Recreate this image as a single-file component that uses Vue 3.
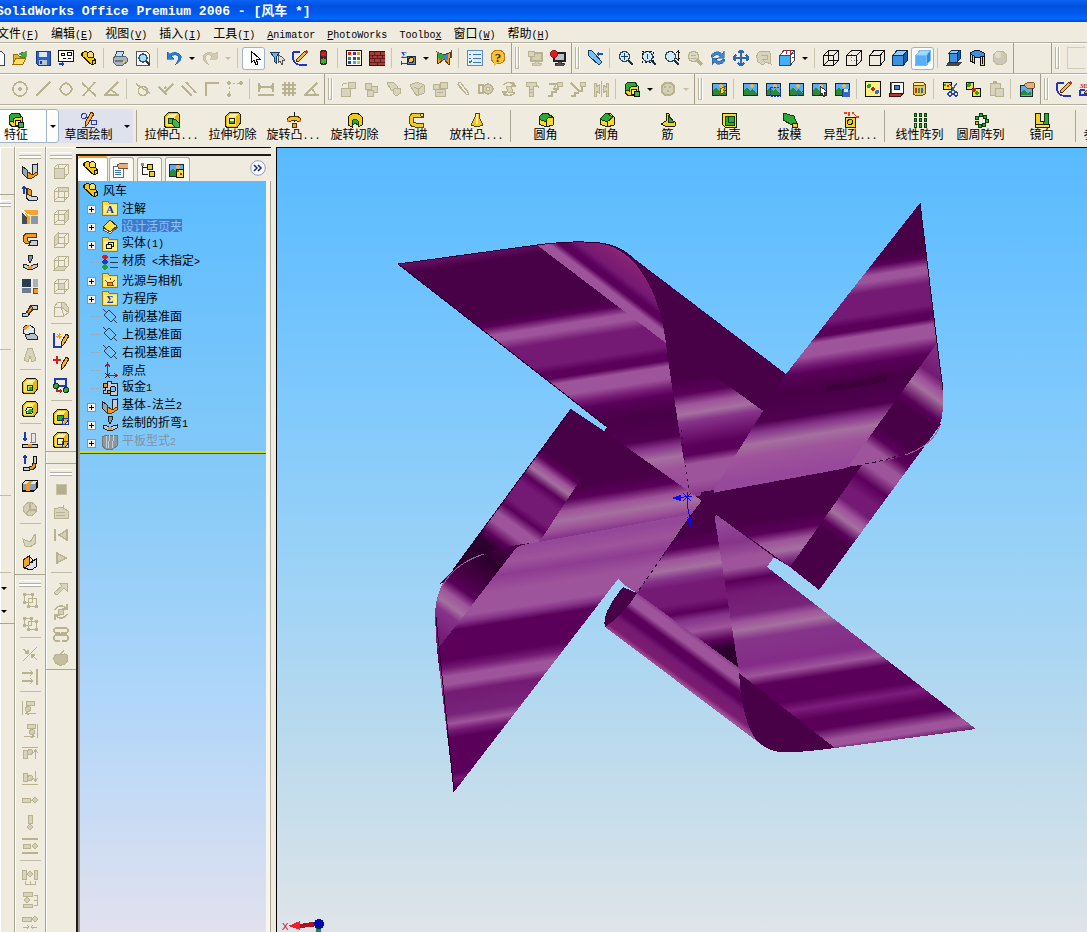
<template>
  <div class="app">
    <header class="title">
      <Label text="SolidWorks Office Premium 2006 - [风车 *]" />
    </header>

    <nav class="menu">
      <button v-for="item in menu" :key="item" type="button"><Label :text="item" /></button>
    </nav>

    <div v-for="(row, r) in toolbarRows" :key="r" class="toolrow">
      <div v-for="(bar, b) in row" :key="b" class="bar" :class="bar.kind">
        <i v-if="bar.grip" class="grip"></i>
        <template v-for="(name, i) in bar.items" :key="i">
          <i v-if="name === '|'" class="sep"></i>
          <button v-else-if="name === 'v' || name === 'vx'" type="button" class="arrow" :class="{ off: name === 'vx' }" aria-label="more"></button>
          <button v-else type="button" class="tool" :class="{ on: name === 'select' || name === 'shaded' }" :aria-label="name">
            <svg viewBox="0 0 16 16" v-html="icons[name]"></svg>
          </button>
        </template>
        <span v-if="bar.kind === 'last'" class="slot"></span>
      </div>
    </div>

    <div class="commands">
      <button type="button" class="mode active">
        <svg viewBox="0 0 16 16" v-html="icons.feature"></svg>
        <Label text="特征" />
      </button>
      <button type="button" class="arrow mode-arrow" aria-label="特征"></button>
      <button type="button" class="mode sketch">
        <svg viewBox="0 0 16 16" v-html="icons.sketchTab"></svg>
        <Label text="草图绘制" />
      </button>
      <button type="button" class="arrow sketch-arrow" aria-label="草图绘制"></button>
      <template v-for="(cmd, i) in commands" :key="i">
        <i v-if="cmd === '|'" class="sep"></i>
        <button v-else type="button" class="command">
          <svg viewBox="0 0 16 16" v-html="icons[cmd[0]]"></svg>
          <Label :text="cmd[1]" />
        </button>
      </template>
    </div>

    <main class="main">
      <aside class="dock narrow">
        <div class="blank top"></div>
        <i class="grip"></i>
        <div class="blank a"></div>
        <i class="sep"></i>
        <div class="blank b"></div>
        <i class="sep"></i>
        <div class="blank c"></div>
        <i class="sep"></i>
        <button type="button" class="arrow" aria-label="more"></button>
        <button type="button" class="arrow" aria-label="more"></button>
        <div class="edge"></div>
      </aside>
      <aside v-for="(dock, d) in docks" :key="d" class="dock" :class="'dock-' + d">
        <section v-for="(group, s) in dock" :key="s">
          <i class="grip"></i>
          <template v-for="(name, i) in group" :key="i">
            <i v-if="name === '|'" class="sep"></i>
            <button v-else type="button" class="tool" :aria-label="name">
              <svg viewBox="0 0 16 16" v-html="icons[name]"></svg>
            </button>
          </template>
        </section>
      </aside>

      <section class="manager">
        <div class="tabs">
          <button v-for="(tab, i) in tabs" :key="tab" type="button" :class="{ current: i === 0 }" :aria-label="tab">
            <svg viewBox="0 0 16 16" v-html="icons[tab]"></svg>
          </button>
          <button type="button" class="expand" aria-label="expand">
            <svg viewBox="0 0 16 16" v-html="icons.chevrons"></svg>
          </button>
        </div>
        <div class="tree">
          <ul>
            <li class="root">
              <svg viewBox="0 0 16 16" v-html="icons.part"></svg>
              <Label text="风车" />
            </li>
            <li v-for="node in nodes" :key="node.text" :class="node.state">
              <button v-if="node.open" type="button" class="plus" :aria-label="node.text"></button>
              <i v-else class="stub"></i>
              <svg viewBox="0 0 16 16" v-html="icons[node.icon]"></svg>
              <Label :text="node.text" />
            </li>
          </ul>
        </div>
      </section>

      <section class="viewport">
        <svg class="model" viewBox="277 148 810 784" width="810" height="784">
          <defs>
            <linearGradient
              v-for="g in gradients"
              :id="g.id"
              :key="g.id"
              gradientUnits="userSpaceOnUse"
              :x1="g.x1"
              :y1="g.y1"
              :x2="g.x2"
              :y2="g.y2"
            >
              <stop v-for="(s, i) in g.stops" :key="i" :offset="s.offset" :stop-color="s.color" />
            </linearGradient>
          </defs>
          <path v-for="(f, i) in faces" :key="i" :d="f.d" :fill="f.fill" />
          <g fill="none" stroke="#26002a" stroke-width="1">
            <path d="M398 264L537 245Q575 240 600 243Q618 245 632 257M920 203L937 343L943 390" />
            <path d="M398 264L607 427M453 570L571 409M436 617L454 792" />
            <path d="M865 464Q888 460 900 455M689 518L637 593" stroke-dasharray="4 3" />
            <path d="M681 430L689 490" stroke-dasharray="2 5" />
          </g>
          <g fill="none" stroke="#a35a9d" stroke-width="1">
            <path d="M437 600Q446 566 484 554M905 455Q932 446 940 426" />
          </g>
          <g fill="none" stroke="#0a0af0" stroke-width="1">
            <path d="M676 498L692 496M687 492V503L690 520M683 493L691 501M691 493L683 501" />
            <path d="M671 498L681 495V501ZM687 517L692 519L691 528Z" fill="#0a0af0" stroke="none" />
          </g>
        </svg>
        <svg class="triad" viewBox="0 0 48 16" width="48" height="16">
          <text x="2" y="14" font-family="Liberation Mono, monospace" font-size="11" fill="#d8101c">X</text>
          <path d="M36 10H41V16H36z" fill="#178a2c" />
          <path d="M20 8L38 5V10L20 12z" fill="#b0101c" />
          <path d="M8 10L20 5V14z" fill="#ec2028" />
          <circle cx="39" cy="8" r="5" fill="#0707a8" />
        </svg>
      </section>
    </main>
  </div>
</template>

<script setup>
import { h } from 'vue';

// "_" marks the accelerator letter; runs of Latin are half the width of a Han character
function Label({ text }) {
  const runs = text.match(/[\x20-\x7e]+|[^\x20-\x7e]+/g);
  return h('span', { class: 'label' }, runs.map(run => {
    if (run.charCodeAt(0) > 0x7e)
      return run;
    const parts = run.split(/_(.)/);
    return h('span', { class: 'latin' }, parts.map((p, i) => (i % 2 ? h('u', p) : p)));
  }));
}
Label.props = ['text'];

const menu = ['文件(_F)', '编辑(_E)', '视图(_V)', '插入(_I)', '工具(_T)', '_Animator', '_PhotoWorks', 'Toolbo_x', '窗口(_W)', '帮助(_H)'];

const list = text => text.split(' ');

const toolbarRows = [
  [
    { kind: 'first', items: list('new open save make part | print preview | undo v redo vx | select filter sketch traffic | palette bricks | measure v fly | checklist help') },
    { grip: true, items: list('monitorOff monitor') },
    { grip: true, items: list('flashlight | zoomFit zoomArea zoomInOut zoomSel rotate pan rollOff viewCube v | wire hidden noHidden edges shaded | shadow section ballOff') },
    { kind: 'filler', items: [] },
    { kind: 'last', grip: true, items: [] }
  ],
  [
    { kind: 'indent', items: list('sCenter sLine sQuad sCross sAngle | sTangent sPerp sParallel sCorner sPoints | sWidth sGrid sSlope') },
    { grip: true, items: list('aInsert aBoxes aHide aEdit aGroup aClip aMate aRotate aBolt aStep1 aStep2 aMirror | feature v gearOff vx') },
    { kind: 'wide', grip: true, items: list('picFlash | pic picCrop picBack picPick picSave | dots book jar | cutPic copyPic pasteOff | picHand') },
    { kind: 'last2', grip: true, items: list('sketch sketch3d') }
  ]
];

const commands = [
  '|',
  ['extrude', '拉伸凸...'], ['extrudeCut', '拉伸切除'], ['revolve', '旋转凸...'],
  ['revolveCut', '旋转切除'], ['sweep', '扫描'], ['loft', '放样凸...'],
  '|',
  ['fillet', '圆角'], ['chamfer', '倒角'], ['rib', '筋'],
  ['shell', '抽壳'], ['draft', '拔模'], ['hole', '异型孔...'],
  '|',
  ['linear', '线性阵列'], ['circular', '圆周阵列'], ['mirror', '镜向'],
  '|',
  ['plane', '参考几...']
];

const docks = [
  [
    list('flange edgeFlange miter hem bend corner jog closed ripOff | cutBox cutRound | unfold fold flat noBendOff | ripGray convert'),
    list('gGroup gUngroup | gCross gArrows | gLeft gRight gTop gBottom gRow gCol gMid | gDistH gDistV gPack')
  ],
  [
    list('vFront vBack vLeft vRight vTop vBottom vIso | planeNew plusPencil relation | exBox cutSq'),
    list('stop record rewind play | gPick gSpin gSpring gApple')
  ]
];

const tabs = ['part', 'property', 'config', 'photo'];

const nodes = [
  { icon: 'note', text: '注解', open: true },
  { icon: 'binder', text: '设计活页夹', open: true, state: 'selected' },
  { icon: 'solids', text: '实体(1)', open: true },
  { icon: 'material', text: '材质 <未指定>' },
  { icon: 'light', text: '光源与相机', open: true },
  { icon: 'equation', text: '方程序', open: true },
  { icon: 'plane', text: '前视基准面' },
  { icon: 'plane', text: '上视基准面' },
  { icon: 'plane', text: '右视基准面' },
  { icon: 'origin', text: '原点' },
  { icon: 'sheet', text: '钣金1' },
  { icon: 'flange', text: '基体-法兰2', open: true },
  { icon: 'bend', text: '绘制的折弯1', open: true },
  { icon: 'flatPattern', text: '平板型式2', open: true, state: 'suppressed' }
];

// icon building blocks, all on a 16x16 grid
const OFF = '#b9b28f';
const p = (d, fill = 'none', stroke = 'none', width = 1) =>
  `<path d="${d}" fill="${fill}" stroke="${stroke}" stroke-width="${width}"/>`;
const c = (x, y, r, fill = 'none', stroke = 'none', width = 1) =>
  `<circle cx="${x}" cy="${y}" r="${r}" fill="${fill}" stroke="${stroke}" stroke-width="${width}"/>`;
const t = (x, y, size, fill, s) =>
  `<text x="${x}" y="${y}" font-size="${size}" font-weight="bold" font-family="Liberation Serif, serif" text-anchor="middle" fill="${fill}">${s}</text>`;
const off = (d, width = 1.5) => p(d, 'none', OFF, width);
const offFill = d => p(d, '#d8d3bc', OFF);
const cube = (front, top, side, stroke = '#000') =>
  p('M.5 5.5H11V15.5H.5z', front, stroke) + p('M.5 5.5L5 .5H15.5L11 5.5z', top, stroke) + p('M11 5.5L15.5 .5V10.5L11 15.5z', side, stroke);
const lens = inner => p('M10 10L15 15', 'none', '#1f3140', 2.5) + c(6.5, 6.5, 5, '#cfeafa', '#28465c', 1.3) + inner;
const picture = (extra = '') =>
  p('M1 2H15V14H1z', '#58aef4', '#1c2430') + c(10, 5, 1.8, '#f8b048') + p('M1.5 13.5V10L5 6L8 10L11 8L14.5 12V13.5z', '#2c8a32') + extra;
const folder = inner => p('M.5 3.5V1.5H6L7.5 3.5H15.5V15H.5z', '#f7dc52', '#9a7a10') + p('M1.5 4.5H14.5V14H1.5z', '#fdee86') + inner;
const block = inner => p('M.5 4.5L4.5 .5H13.5L15 2V11.5L12 15.5H2L.5 14z', '#e8b80c', '#221c00') + p('M2 5H11V14H2z', '#fbe45c') + p('M2 5L5 2H13L11 5z', '#fdf09c') + inner;
const pencil = p('M8 11L13 2L16 4L11 12L8 15z', '#f3b43c', '#3c2404');
const face = d => p('M1 5H11V15H1zM1 5L5 1H15V11L11 15M11 5L15 1M5 1V11H15M5 11L1 15', 'none', OFF) + p(d, '#d8d3bc', OFF);
const monitor = (body, screen, line) => p('M4 3H15V11H4z', screen, line, 1.4) + p('M8 11H11V13H14V15H5V13H8z', body, line, .8);

const icons = {
  new: p('M4 1H12L15 4V15H4z', '#fff', '#345'),
  open: p('M1 14V4H5L7 6H12V8', '#e8b820', '#9c6c08') + p('M1 14L4 8H14L11 14z', '#ffe060', '#9c6c08') + p('M7 4Q10 1 12 3L14 1V7H8L10 5z', '#3fae3c', '#1c6a20', .6),
  save: p('M1 1H15V15H3L1 13z', '#2d63c8', '#173a86') + p('M4 1.5H12V7H4z', '#d9e6f6') + p('M4 10H12V15H4z', '#b8c4d4') + p('M5 11H7V14H5z', '#173a86'),
  make: p('M.5 .5H15.5V11.5H.5z', '#fff', '#111') + p('M3.5 3.5H6.5V5.5H3.5zM9.5 2.5H13.5V5.5H9.5zM4.5 8.5H7.5M9.5 8.5H12.5', 'none', '#111') + p('M1 14H6M4 12L6 14L4 16', 'none', '#1c3cc8', 1.3),
  part: p('M1 3L5 1L14 9L15 13L11 15L1 6z', '#f2c81c', '#1c1800', 1.2) + p('M6 3L10 1L12 3V7L8 8L6 6z', '#f9e060', '#1c1800') + p('M5 10L1 6M11 15V11L15 10', 'none', '#1c1800'),
  print: p('M5 1H12L10 7H3z', '#bfe0fb', '#27506e') + p('M1 8L4 6H13L15 8V12L11 15H4L1 12z', '#a9b4bd', '#58646e') + p('M3 10H11V12H3z', '#6b7882') + c(12, 12, 1, '#f8c430'),
  preview: p('M1 1H11L14 4V15H1z', '#fff', '#4a5660') + p('M10 10L15 15', 'none', '#234', 2) + c(8, 8, 4, '#a8dcf8', '#2a5878', 1.4),
  undo: p('M1 2V9H8L5 6Q9 3 12 6Q14 9 9 15Q16 11 15 6Q11 0 4 4z', '#2a80d8', '#1456a4', .6),
  redo: p('M15 2V9H8L10 7Q7 3 4 6Q2 9 7 15Q0 11 1 6Q5 0 12 4z', '#d0cbb1', OFF, .6),
  select: p('M5 1V13L8 10L10 15L12 14L10 9H14z', '#fff', '#111'),
  filter: p('M1 2H11L7 7V13L5 11V7z', '#68b0f0', '#123c68') + p('M9 4V13L11 11L13 15L14 14L13 10H16z', '#ddd', '#333', .8),
  sketch: p('M1 2H8M1 2V7Q1 14 8 15H15', 'none', '#2434c0', 1.8) + p('M5 9L13 1L15 3L7 11L4 12z', '#f3b43c', '#5a2c10') + p('M12 2L14 0L16 2L14 4z', '#b83428'),
  sketch3d: t(5, 7, 7, '#c03010', '3D') + p('M1 9H6M1 9V14H15', 'none', '#2434c0', 1.6) + p('M5 12L12 5L14 7L8 13z', '#f3b43c', '#5a2c10'),
  traffic: '<rect x="5" y="0" width="7" height="15" rx="3" fill="#3c2820"/>' + c(8.5, 4, 2.6, '#e01818') + c(8.5, 11, 2.6, '#2cb82c'),
  palette: p('M.5 .5H15.5V15.5H.5z', '#fff', '#111') + p('M2 2H5V5H2z', '#e02020') + p('M7 2H10V5H7z', '#802090') + p('M11 2H14V5H11z', '#f09020') + p('M2 7H5V10H2zM11 7H14V10H11z', '#1c9830') + p('M7 7H10V10H7zM2 11H5V14H2z', '#2040c0') + p('M7 11H10V14H7z', '#20b8c8') + p('M11 11H14V14H11z', '#d8c020'),
  bricks: p('M0 1H16V15H0z', '#a83c38', '#3c1010') + p('M0 5H16M0 8H16M0 12H16M5 1V5M11 1V5M8 5V8M3 5V8M13 5V8M5 8V12M11 8V12M8 12V15', 'none', '#4c1414', .8),
  measure: t(4, 8, 9, '#2040c0', 'Σ') + p('M7 6H15V14H7z', '#6a86b0', '#1c2c44') + c(11, 10, 2.5, '#f4cc30', '#222') + p('M1 13H7M1 11V15', 'none', '#2040c0'),
  fly: p('M1 2L8 5L15 2L13 15L8 9L2 14z', '#e8a020', '#6c2c10') + p('M1 2L8 5L8 9L3 10z', '#2ca83c') + p('M8 5L12 4L12 10L8 9z', '#3a80d8') + p('M15 0V8', 'none', '#c02020'),
  checklist: p('M.5 .5H15.5V15.5H.5z', '#dff0fc', '#5c8cc0') + p('M2 4H4M6 4H14M2 8H4M6 8H14M6 12H14', 'none', '#3c74b8') + p('M2 11L3 13L5 10', 'none', '#209030', 1.3),
  help: c(8, 7, 7, '#f6c238', '#c07c08') + p('M4 12L4 16L8 13z', '#f6c238') + t(8, 12, 13, '#4c2c04', '?'),
  monitorOff: monitor('#d3ceb5', '#d3ceb5', OFF) + offFill('M1 1H7V6H1z'),
  monitor: monitor('#555', '#b8c0c8', '#222') + c(4, 4, 3.6, '#e01c1c', '#901010', .8),
  flashlight: p('M1 1L4 0L7 3L15 12L12 15L3 7L1 5z', '#7cc0f0', '#103c70') + p('M10 4H16M12 2L10 4L12 6', 'none', '#1c54b0', 1.3),
  zoomFit: lens(p('M6.5 3V10M3 6.5H10', 'none', '#1c4060')),
  zoomArea: lens('<path d="M1 1H12V12H1z" fill="none" stroke="#111" stroke-dasharray="2 2"/>' + p('M6.5 4V9', 'none', '#246')),
  zoomInOut: lens(p('M14.5 1V10M12 3L14.5 1L16 3M12 8L14.5 10L16 8', 'none', '#111')),
  zoomSel: p('M10 10L15 15', 'none', OFF, 3) + c(6.5, 6.5, 5, '#dcd8c2', OFF, 1.5) + off('M4 5H9M4 8H9', 1),
  rotate: p('M1 7Q2 1 9 2L12 4L14 1V8H8L10 6Q6 3 3 7zM15 9Q14 15 7 14L4 12L2 15V8H8L6 10Q10 13 13 9z', '#3c84d4', '#174c90', .5),
  pan: p('M8 0V16M0 8H16M5 3L8 0L11 3M5 13L8 16L11 13M3 5L0 8L3 11M13 5L16 8L13 11', 'none', '#2c68b8', 1.5),
  rollOff: offFill('M1 8Q0 2 6 1H12Q16 3 14 9L15 14L10 12L7 15L2 12z') + off('M5 5H11V9H6L9 12', 1),
  viewCube: cube('#40b0f8', '#fff', '#fff', '#445') + p('M7 0V4M11 0V4M13 4L15 3M13 8L15 7', 'none', '#d01830'),
  wire: p('M.5 5.5H10.5V15.5H.5zM.5 5.5L5.5 .5H15.5V10.5L10.5 15.5M10.5 5.5L15.5 .5M5.5 .5V10.5H15.5M5.5 10.5L.5 15.5', 'none', '#111'),
  hidden: p('M.5 5.5H10.5V15.5H.5zM.5 5.5L5.5 .5H15.5V10.5L10.5 15.5M10.5 5.5L15.5 .5', 'none', '#111') + '<path d="M5.5 .5V10.5H15.5M5.5 10.5L.5 15.5" fill="none" stroke="#777" stroke-dasharray="1 2"/>',
  noHidden: cube('none', 'none', 'none', '#111'),
  edges: cube('#3c90e0', '#90ccf8', '#1c5cb0', '#0c2c58'),
  shaded: cube('#58b0f8', '#a4d8ff', '#3484e0', '#78bcf4'),
  shadow: p('M2 12H16L12 16H0z', '#484840') + p('M3 3H11V12H3z', '#3c90e0', '#0c2c58') + p('M3 3L6 0H14L11 3z', '#90ccf8', '#0c2c58') + p('M11 3L14 0V9L11 12z', '#1c5cb0', '#0c2c58'),
  section: p('M1 3Q8-2 15 3V15H11V7H5V13L1 11z', '#3c90e0', '#0c1c38') + p('M1 4L5 6V13L1 11zM11 6H15V15H11z', '#f0dc40', '#111') + p('M3 6V12M13 7V14', 'none', '#111'),
  ballOff: c(8, 8, 7, '#cdc8b4', '#bfb99f') + c(6, 5, 3, '#e0dccb'),

  sCenter: c(8, 8, 7, 'none', OFF, 1.6) + c(8, 8, 1.8, OFF),
  sLine: off('M1 15L15 1') + c(8, 8, 1.6, OFF),
  sQuad: c(8, 8, 5.5, 'none', OFF, 1.5) + p('M8 0L10 3H6zM8 16L10 13H6zM0 8L3 6V10zM16 8L13 6V10z', OFF),
  sCross: off('M1 2L15 15M14 1L2 15', 1.8),
  sAngle: off('M14 1L1 14H15M6 8L14 14', 1.7),
  sTangent: c(8, 10, 4.5, 'none', OFF, 1.6) + off('M1 3L15 12', 1.6),
  sPerp: off('M1 6L9 14M15 3L6 12M6 8L8 6', 1.6),
  sParallel: off('M1 5L11 15M5 1L15 12', 1.8),
  sCorner: off('M2 15V2H15', 2),
  sPoints: c(2, 2, 1.8, OFF) + c(14, 2, 1.8, OFF) + c(2, 14, 1.8, OFF) + `<path d="M2 2H14M2 2V14" stroke="${OFF}" stroke-dasharray="2 2"/>`,
  sWidth: off('M1 2V11M15 2V11M1 6H15M0 14H16M3 4L1 6L3 8M13 4L15 6L13 8', 1.4),
  sGrid: off('M4 1V15M8 1V15M12 1V15M1 4H15M1 8H15M1 12H15', 1.1),
  sSlope: off('M13 2L1 14H15M8 7L12 14', 1.6),

  aInsert: offFill('M1 7H10V15H1z') + offFill('M8 1H15V7H8z') + off('M2 5Q3 1 7 3', 1),
  aBoxes: offFill('M2 2H8V8H2z') + offFill('M8 5H14V11H8z') + offFill('M4 9H10V15H4z'),
  aHide: offFill('M1 2L7 1L11 5V9L5 9z') + offFill('M8 8L14 7L15 12L10 15L7 12z'),
  aEdit: offFill('M1 4L8 1L15 4V12L8 15L5 11z') + off('M5 6L9 8V14M9 8L14 5', 1),
  aGroup: offFill('M1 3H7V8H1z') + offFill('M8 1H15V7H8z') + offFill('M3 8H13V15H3z') + off('M5 11H11', 1),
  aClip: off('M3 3L11 13Q14 15 13 11L6 2Q3 0 3 4L10 12', 1.2),
  aMate: off('M1 4H5V12H1z', 1.4) + c(10, 8, 5, '#d3ceb5', OFF, 1.4) + c(10, 8, 2, '#eeeade', OFF),
  aRotate: off('M2 4Q8-1 13 4M14 12Q8 17 3 12M12 1L14 5H10M4 15L2 11H6', 1.4) + offFill('M5 5L10 5L12 11L7 11z'),
  aBolt: offFill('M2 1H12V5H9V15H5V5H2z') + off('M12 3L15 7M5 8H9M5 11H9', 1),
  aStep1: offFill('M10 1H15V5H10z') + off('M2 3H9L7 8H11V5M1 15H5V11H9V8', 1.5),
  aStep2: offFill('M10 1H15V5H10z') + off('M1 2L9 10M1 15H5V12H9M12 5V10H8', 1.5),
  aMirror: off('M8 0V16', 1) + offFill('M1 2H3V6L6 4V12L3 10V15H1zM15 2H13V6L10 4V12L13 10V15H15z'),
  feature: p('M1 6L4 2H10L14 5V14L5 15L1 12z', '#f2d81c', '#1c1800') + p('M1 6Q1 1 7 1T13 5L9 6Q5 5 5 10L1 9z', '#2ea838', '#0c3c10') + p('M7 8H12V13H7z', '#fae878', '#111') + p('M10 10H15V15H10z', '#38b848', '#111'),
  gearOff: c(8, 8, 6.5, '#d3ceb5', OFF, 2) + c(5, 6, 1.5, OFF) + c(10, 6, 1.5, OFF) + c(8, 10, 1.5, OFF),
  picFlash: picture(p('M9 8L15 5L12 9H15L8 15L10 10z', '#f8e030', '#4c3c04', .7)),
  pic: picture(),
  picCrop: picture('<path d="M5.5 6.5H15.5V15.5H5.5z" fill="none" stroke="#2038b0" stroke-dasharray="2 1"/>'),
  picBack: picture(p('M15 9L13 12H10V10L7 13L10 16V14H14z', '#2c60c8')),
  picPick: picture(p('M9 5V14L11 12L13 16L14 15L13 11H16z', '#fff', '#111', .8)),
  picSave: picture(p('M8 8H16V16H8z', '#3468c8', '#143070', .8) + p('M10 8H14V11H10z', '#dde8f8')),
  dots: p('M.5 .5H15.5V15.5H.5z', '#fbf080', '#111') + c(4, 5, 2, '#28a030') + c(8, 8, 1.8, '#d02020') + c(12, 11, 2, '#3a6ad0'),
  book: p('M2 1H15V12H2z', '#fff', '#222') + p('M1 12H15L13 15H1z', '#b83830', '#401010') + p('M6 4H11V8H6z', '#4c78d0', '#222') + p('M3 1V12', 'none', '#b83830'),
  jar: p('M2 3V13Q8 17 14 13V3z', '#eac450', '#704c08') + '<ellipse cx="8" cy="3" rx="6" ry="2" fill="#fbe9a0" stroke="#704c08"/>' + p('M4 7H6V12H4z', '#d03020') + p('M7 7H9V12H7z', '#309c38') + p('M10 7H12V12H10z', '#3064c8'),
  cutPic: p('M1 1H9V8H1z', '#f8e030', '#111') + c(3, 4, 1.5, '#28a030') + c(6, 5, 1.5, '#d02020') + p('M15 2L8 12M8 3L14 12', 'none', '#345c98', 1.4) + c(8, 13, 2, 'none', '#2848a0', 1.3) + c(14, 13, 2, 'none', '#2848a0', 1.3),
  copyPic: p('M1 1H8V8H1z', '#f8e030', '#111') + p('M7 7H15V15H7z', '#f8e030', '#111') + c(4, 4, 2, '#28a030') + c(9, 9, 2, '#d02020') + c(12, 12, 1.8, '#28a030'),
  pasteOff: offFill('M2 2H12V14H2z') + offFill('M7 7H15V15H7z') + off('M5 1H9', 2),
  picHand: p('M1 4H13V15H1z', '#58aef4', '#1c2430') + p('M2 14V11L5 8L8 12L12 11V14z', '#2c8a32') + p('M5 4L9 1L15 2V7L9 8z', '#e8b078', '#60380c', .8),

  sketchTab: c(3, 4, 2.5, 'none', '#3038c0') + p('M10.5 8.5H15.5V12.5H10.5zM1 15.5H14', 'none', '#3038c0') + p('M4 11L10 0L13 2L7 12L4 15z', '#f3b43c', '#5a2c10'),
  extrude: block(p('M4.5 6.5H9.5V11.5H4.5z', '#40b848', '#0c3c10') + p('M8 8L11 7L15 11V15H11L8 12z', '#40b848', '#0c3c10')),
  extrudeCut: block(p('M4.5 6.5H9.5V11.5H4.5z', '#fdf4b0', '#221c00') + p('M5 9H9V11H5z', '#2ea838')),
  revolve: p('M8 0V10', 'none', '#111') + p('M1 8Q3 3 8 5Q13 3 15 8L13 10Q8 6 3 10z', '#f6c020', '#4c3404') + p('M6 11H10V15H6z', '#f6a020', '#4c3404') + c(2, 9, 1.4, '#e87818') + c(14, 9, 1.4, '#e87818'),
  revolveCut: p('M1 5Q8-3 15 5V13L11 15V9Q8 5 5 9V15L1 13z', '#f0cc18', '#221c00') + p('M5 9Q8 5 11 9V13L8 11L5 14z', '#2ea838', '#0c3c10'),
  sweep: p('M15 1H7Q1 1 1 8T7 15H15V11H8Q5 11 5 8T8 5H15z', '#f4c81c', '#5c4404') + c(14, 3, 1.5, '#fae878', '#221c00', .8),
  loft: p('M6 1H10V5L14 13L8 15L2 13L6 5z', '#f4c81c', '#5c4404') + p('M8 2V12', 'none', '#fdf0a0', 1.6),
  fillet: p('M1 7Q2 1 9 1L15 5V13L8 15L1 12z', '#f4dc28', '#221c00') + p('M1 7Q2 1 9 1L14 5Q8 5 8 10z', '#2ea838', '#0c3c10') + p('M8 10V15', 'none', '#221c00'),
  chamfer: p('M1 7L7 1L11 1L15 5V13L8 15L1 12z', '#f4dc28', '#221c00') + p('M1 7L7 1L14 5L8 10z', '#2ea838', '#0c3c10') + p('M8 10V15', 'none', '#221c00'),
  rib: p('M6 1L9 2V9L15 10V14L7 15L1 12L6 9z', '#f4d020', '#221c00') + p('M8 3L14 10L8 11z', '#2ea838', '#0c3c10'),
  shell: p('M1 1H15V15H4L1 12z', '#f4dc28', '#221c00') + p('M4 4H13V13H4z', '#2ea838', '#0c3c10') + p('M7 4V10H13', 'none', '#0c3c10'),
  draft: p('M1 1L12 4L15 12L10 13L1 8z', '#2ea838', '#0c3c10') + p('M10 11H15V15.5H10z', '#f4d020', '#221c00'),
  hole: p('M2 5H12V15H2z', '#f4d020', '#221c00') + c(7, 10, 2.5, '#c0d850', '#221c00') + p('M1 1H4M6 0V4M9 1H11M13 5H16M10 1L15 6', 'none', '#e04820', 1.3),
  linear: [2, 7, 12].map(x => p(`M${x} 1H${x + 2}V4H${x}z`, '#2ea838', '#0c3c10') + p(`M${x} 6H${x + 2}V9H${x}z`, '#2ea838', '#0c3c10') + p(`M${x} 11H${x + 2}V15H${x}z`, x === 2 ? '#f4b020' : '#2ea838', '#0c3c10')).join(''),
  circular: [[6, 1], [10, 3], [12, 7], [9, 11], [5, 12], [2, 9], [2, 4]].map(([x, y], i) => `<rect x="${x}" y="${y}" width="3" height="3" fill="${i === 5 ? '#f4b020' : '#2ea838'}" stroke="#0c3c10"/>`).join(''),
  mirror: p('M2 1H6V9H9V14H1V5z', '#f4d020', '#221c00') + p('M10 1H14V9L15 14H9V9H10z', '#2ea838', '#0c3c10') + p('M1 12H15V15H1z', '#f4e050', '#221c00'),

  flange: p('M0 3L5 7V15L0 10z', '#98a4b4', '#1c242c') + p('M10 2L15 1V9L10 12z', '#c8ccd4', '#1c242c') + p('M5 8L10 12L15 9V12L10 15L5 15z', '#f09a20', '#5c3404'),
  edgeFlange: p('M5 2L9 4V10L15 11V14L8 15L4 12z', '#d4d8dc', '#1c242c') + p('M5 2L9 4V10L5 8z', '#f09a20', '#5c3404') + p('M2 1V8M0 3L2 0L4 3', 'none', '#2038b8', 1.2),
  miter: p('M0 1H16V6H8L8 15H4V6z', '#f8a428') + p('M9 7H16V15H9z', '#8c98a8') + p('M0 4L5 8V15H0z', '#404c58') + p('M0 1L8 7', 'none', '#fff'),
  hem: p('M14 1H6Q1 2 1 7T7 12H9V9H6Q4 7 6 5H14z', '#f09a20', '#5c3404') + p('M9 8H15V13H7z', '#c8ccd4', '#1c242c'),
  bend: p('M6 0H10V4L8 8L6 4z', '#889098', '#1c242c') + p('M1 9L5 10L8 12L11 10L15 9V12L11 14H5L1 12z', '#c8ccd4', '#1c242c') + p('M6 11H10V14H6z', '#f09a20'),
  corner: p('M0 1H9V9H0z', '#2c3c50') + p('M11 1H16V9H11z', '#a8b0bc') + p('M0 10H9V15H0z', '#6c7c94') + p('M11 10H16V15H11z', '#f09a20', '#7c4404'),
  jog: p('M0 12H4L9 4H15V8H11L6 15H0z', '#c8ccd4', '#1c242c') + p('M5 11L9 5L11 7L7 13z', '#f09a20', '#5c3404'),
  closed: p('M1 5Q2 1 8 1L12 4V9L5 11L1 9z', '#e4e6ea', '#1c242c') + p('M3 11L12 9L15 12V15H5z', '#b8c0c8', '#1c242c') + p('M1 5Q2 1 8 1L5 4L3 6z', '#f09a20'),
  ripOff: offFill('M6 1H10L14 13L10 15L8 9L6 15L2 13z'),
  cutBox: block(p('M5 7H10V12H5z', '#b8e878', '#0c3c10') + p('M7 9H10V12H7z', '#2ea838')),
  cutRound: block(c(7.5, 9.5, 3.5, '#f4fcd8', '#111') + p('M5 11Q8 14 11 9Q9 8 7 8z', '#2ea838')),
  unfold: p('M3 0V8M1 6L3 9L5 6', 'none', '#2038b8', 1.3) + p('M0 12H15V15H0z', '#c8ccd4', '#111') + p('M6 12H10V15H6z', '#f09a20') + p('M10 1H13V10H9z', '#e4e6ea', '#888'),
  fold: p('M3 9V1M1 3L3 0L5 3', 'none', '#2038b8', 1.3) + p('M1 12H8Q11 12 11 8V1H14V9Q14 15 8 15H1z', '#c8ccd4', '#111') + p('M7 12Q11 12 11 8H14Q14 15 8 15z', '#f09a20', '#111', .7),
  flat: p('M0 6L3 3H15V10L12 13H0z', '#8c9cb4', '#111', 1.3) + p('M0 6H12L15 3H3z', '#dfe4ea') + p('M7 3H11L8 6V13H4V6z', '#f09a20'),
  noBendOff: c(8, 8, 6.5, '#d3ceb5', OFF) + off('M8 2V9H14M8 9L3 13', 1.2),
  ripGray: offFill('M1 7L8 10L13 2L14 11L8 15L3 14z'),
  convert: p('M1 5L7 1V10L2 13z', '#f0a42c', '#3c2404') + p('M8 8L14 4V12L9 15L2 13L7 10z', '#dce0e8', '#111') + p('M7 1L10 4V8', 'none', '#111'),
  gGroup: off('M2.5 2.5H10.5V10.5H2.5zM6.5 6.5H14.5V14.5H6.5z', 1) + p('M1 1H4V4H1zM9 1H12V4H9zM1 9H4V12H1zM13 13H16V16H13zM5 13H8V16H5z', OFF),
  gUngroup: off('M2.5 3.5H9.5V10.5H2.5zM6.5 6.5H14.5V14.5H6.5z', 1) + p('M1 2H4V5H1zM8 2H11V5H8zM1 9H4V12H1zM13 5H16V8H13zM5 13H8V16H5zM13 13H16V16H13z', OFF),
  gCross: off('M1 15L15 1M1 3L6 7M10 9L15 14M6 4V7H3M10 12V9H13', 1.3),
  gArrows: off('M0 4H11M0 12H11M8 1L11 4L8 7M8 9L11 12L8 15M15 0V16', 1.4),
  gLeft: off('M.5 1V15', 1) + offFill('M4 1H12V5H4z') + c(6, 9, 2.5, '#d3ceb5', OFF) + off('M14 13.5H4M7 11L4 13.5L7 15', 1),
  gRight: off('M15.5 1V15', 1) + offFill('M5 1H13V5H5z') + c(10, 9, 2.5, '#d3ceb5', OFF) + off('M2 13.5H12M9 11L12 13.5L9 15', 1),
  gTop: off('M0 1H16M13.5 13V4M11 7L13.5 4L16 7', 1) + offFill('M1 4H5V12H1z') + c(8, 6, 2.5, '#d3ceb5', OFF),
  gBottom: off('M0 15H16M13.5 2V11M11 9L13.5 12L16 9', 1) + offFill('M1 4H5V12H1z') + c(8, 9, 2.5, '#d3ceb5', OFF),
  gRow: offFill('M.5 6H8V10H.5z') + c(13, 8, 2.3, '#d3ceb5', OFF) + off('M8 8H11', 1),
  gCol: offFill('M6 .5H10V8H6z') + c(8, 12, 2.3, '#d3ceb5', OFF) + off('M8 8V10', 1),
  gMid: off('M0 1H16M0 15H16', 1.8) + offFill('M1 6H8V10H1z') + c(13, 8, 2.3, '#d3ceb5', OFF),
  gDistH: offFill('M.5 1H4V10H.5z') + offFill('M12 1H15.5V10H12z') + c(8, 5, 2.3, '#d3ceb5', OFF) + off('M3 12V15H13V12M8 12V15', 1),
  gDistV: offFill('M1 .5H10V4H1z') + offFill('M1 12H10V15.5H1z') + c(5, 8, 2.3, '#d3ceb5', OFF) + off('M12 3H15V13H12M12 8H15', 1),
  gPack: offFill('M.5 2H9V6H.5z') + c(13, 4, 2.3, '#d3ceb5', OFF) + off('M1 12H7M5 10L7 12L5 14M15 12H9M11 10L9 12L11 14', 1),
  vFront: face('M1 5H11V15H1z'),
  vBack: face('M5 1H15V5H5z'),
  vLeft: face('M11 5L15 1V11L11 15z'),
  vRight: face('M1 5L5 1V11L1 15z'),
  vTop: face('M1 15L5 11H15L11 15z'),
  vBottom: face('M5 5H11V11H5z'),
  vIso: off('M1 6L5 1H11L15 6V12L11 15H1zM1 6H8L11 15', 1) + offFill('M8 1H11L15 6V11L8 6z'),
  planeNew: p('M1 1V15H9', 'none', '#2038b8', 1.5) + p('M6 1V7M3 4H9M4 2L8 6M8 2L4 6', 'none', '#f0a020') + pencil,
  plusPencil: p('M4 1V9M0 5H8', 'none', '#d02020', 1.8) + pencil,
  relation: p('M2 1H13V8H2z', 'none', '#2038b8', 1.3) + c(3, 8, 2.5, '#2ea838', '#0c3c10') + c(13, 12, 2.5, '#2ea838', '#0c3c10') + p('M4 11V13H9M7 11L9 13L7 15', 'none', '#c02020', 1.3),
  exBox: block(p('M4 6H10V11H4z', '#2ea838', '#0c3c10') + p('M9.5 9.5H15.5V15.5H9.5z', 'none', '#2038b8')),
  cutSq: block(p('M4 6H10V12H4z', '#fdf0a0', '#221c00') + p('M9.5 9.5H15.5V15.5H9.5z', 'none', '#2038b8')),
  stop: p('M3 3H13V13H3z', '#b5ae8c', '#c8c2a6'),
  record: offFill('M1 5L9 3L15 7V14H1z') + off('M3 8H12M3 11H12M10 1V5', 1),
  rewind: off('M2 2V14', 2.2) + p('M14 3V13L6 8z', '#d3ceb5', OFF, 1.4),
  play: p('M4 3V13L13 8z', '#d3ceb5', OFF, 1.4),
  gPick: offFill('M6 2H14V10L11 7L4 14L1 12L9 5z'),
  gSpin: off('M2 6Q6-1 13 4M14 10Q10 17 3 12M14 0V5H9M2 16V11H7', 1.6) + c(8, 8, 3, '#d3ceb5', OFF),
  gSpring: off('M7 6H4Q1 6 1 3.5T4 1H12Q15 1 15 3.5T12 6H9M7 14H4Q1 14 1 11T4 8H12Q15 8 15 11T12 14H9M7 6V9M9 5V8', 1.8),
  gApple: p('M8 5Q13 2 15 7Q15 14 9 15H6Q0 13 1 7Q3 3 8 5z', '#c4be9f', OFF) + off('M8 5Q8 2 11 1', 1.4),

  property: p('M1 4H11V15H1z', '#fff', '#3c70b8') + p('M3 8.5H9M3 10.5H9M3 12.5H9', 'none', '#3c70b8') + p('M5 3L9 1L16 2V7L10 6L7 7z', '#e8b078', '#60380c', .8),
  config: p('M2.5 1V13M2 5.5H7M2 12.5H8', 'none', '#222') + p('M7 2H12V7H7z', '#f2d030', '#221c00') + p('M9 9H14V14H9z', '#f2d030', '#221c00') + p('M1 1H4V4H1z', '#888'),
  photo: picture(p('M8 7H15V15H8z', '#f8e030', '#111') + c(10, 9, 1.5, '#28a030') + c(13, 12, 1.5, '#d02020')),
  chevrons: c(8, 8, 7.3, '#fdfdff', '#8c9cc8') + p('M4 5L7 8L4 11M8 5L11 8L8 11', 'none', '#142c88', 1.5),
  note: folder(t(8, 13, 11, '#1830a8', 'A')),
  binder: p('M1 9L8 2L15 8L8 14z', '#fbe044', '#403000', 1.1) + p('M1 10L8 14L15 9V10L8 15.5L1 12z', '#fff', '#403000', .8),
  solids: folder(p('M4.5 8.5H9.5V12.5H4.5zM6.5 8V6.5H11.5V10.5H10', 'none', '#111')),
  material: c(3, 3, 2.6, '#d82020') + c(3, 8, 2.6, '#2038c8') + c(3, 13, 2.6, '#20a038') + p('M8 3.5H16M8 8.5H16M8 13.5H16', 'none', '#303840'),
  light: folder(p('M5 13A3 3 0 0 1 11 13z', '#f09020', '#803c04') + p('M8 6V8M3 8L5 10M13 8L11 10', 'none', '#803c04')),
  equation: folder(t(8, 13, 10, '#1830a8', 'Σ')),
  plane: p('M7 2L14 9L9 14L2 7zM1 1L5 5M11 11L15 15', 'none', '#203040', .9),
  origin: p('M5.5 13V2M3 5L5.5 1L8 5', 'none', '#a01828') + p('M5 13.5H15M12 11L15 13.5L12 16', 'none', '#a01828') + p('M3 11L8 16M8 11L3 16', 'none', '#222'),
  sheet: p('M1 3H5V1H9V3H15V15H8V13H1V10H3V7H1z', '#c8ccd4', '#1c242c') + p('M1 3H5V7H1zM5 10H8V13H5z', '#f09a20', '#111') + c(11, 9, 2.6, '#74c4fc', '#111'),
  flatPattern: p('M0 3L4 1L15 1V12L11 15L4 15L0 12z', '#8c98a4', '#707880') + p('M4 2V14M8 1L6 14M12 1L10 14', 'none', '#c4ccd4')
};

// Shading: a face is filled with bands that run across one of four directions.
const D = '#480046';
const DD = '#2c002c';
const V = '#5a005a';
const M = '#741a74';
const R = '#86348a';
const L = '#9e549a';
const X = '#a5709f';

const directions = {
  level: [0.156, 0.988],
  across: [-0.583, 0.812],
  rollTop: [0.605, -0.796],
  rollTube: [-0.591, 0.807]
};

const shades = {
  upper: ['level', [[318, M], [334, D], [392, D], [399, V], [408, L], [414, L], [424, M], [446, M], [454, V], [460, V], [466, L], [478, L], [487, M], [494, V], [510, D], [536, '#500050'], [545, R], [556, X], [568, L], [590, '#98489a']]],
  middle: ['level', [[480, D], [496, V], [507, L], [516, X], [524, R], [535, M], [548, V], [557, V], [566, L], [584, L], [600, R]]],
  leftBody: ['level', [[568, D], [582, V], [593, L], [602, X], [610, L], [618, R]]],
  leftFront: ['level', [[596, R], [606, L], [620, '#944698'], [634, L], [646, '#8e3c92'], [662, L], [680, L], [686, R], [693, V], [722, V], [730, M], [738, L], [746, L], [754, M], [776, '#78247a'], [785, L], [792, M], [799, V], [834, V], [840, M], [848, V]]],
  bottomMid: ['level', [[634, D], [648, V], [658, L], [668, X], [676, R], [684, M], [702, M], [712, V], [720, R], [732, L], [744, V], [754, DD]]],
  bottomRight: ['level', [[600, R], [630, '#94489a'], [650, R], [666, L], [676, L], [688, V], [700, M], [722, '#78247a'], [730, L], [738, X], [748, R], [774, '#842c88'], [785, L], [795, V], [816, V], [825, '#7c1c7c'], [836, V], [848, V], [860, L], [866, L], [876, D]]],
  rightDark: ['level', [[632, D], [646, V], [656, L], [666, X], [674, R], [684, V]]],
  rollRight: ['across', [[-268, R], [-240, M], [-230, L], [-222, X], [-206, V], [-198, D], [-168, D], [-156, V], [-145, L], [-130, L]]],
  stripRight: ['across', [[-178, D], [-150, V], [-138, L], [-128, L], [-114, V], [-100, M], [-86, M], [-78, L], [-70, X], [-58, V], [-50, D]]],
  stripLeft: ['across', [[48, D], [56, V], [64, L], [70, X], [79, V], [88, M], [108, M], [116, V], [126, L], [136, L], [148, V], [158, DD]]],
  rollLeft: ['across', [[150, D], [170, DD], [196, D], [210, V], [220, L], [230, X], [238, R], [262, M]]],
  rollTop: ['rollTop', [[130, L], [138, L], [144, V], [149, V], [156, M], [170, '#862072'], [180, R], [186, L]]],
  tube: ['rollTube', [[101, R], [106, L], [114, L], [121, V], [128, V], [134, M], [144, '#7c1c70'], [149, L]]]
};

const gradients = Object.entries(shades).map(([id, [dir, bands]]) => {
  const [dx, dy] = directions[dir];
  const from = bands[0][0];
  const to = bands[bands.length - 1][0];
  return {
    id,
    x1: dx * from,
    y1: dy * from,
    x2: dx * to,
    y2: dy * to,
    stops: bands.map(([at, color]) => ({ offset: (at - from) / (to - from), color }))
  };
});

const faces = [
  { fill: D, d: 'M632 257L786 374L766 413L720 500L863 464L790 567L772 556L714 513L739 673L637 593L689 518L680 480L660 340Z' },
  { fill: D, d: 'M600 243Q618 245 632 257L786 374L766 440L700 480L666 343Z' },
  { fill: 'url(#middle)', d: 'M666 343L730 387L766 413L790 400L712 494L689 497Z' },
  { fill: 'url(#upper)', d: 'M398 264L537 245L666 343Q671 385 690 497L650 476L604 432L607 427Z' },
  { fill: 'url(#rollTop)', d: 'M537 245Q575 240 600 243Q628 249 644 276Q660 300 666 343Z' },
  { fill: 'url(#rightDark)', d: 'M714 490L865 464L790 567L714 512Z' },
  { fill: 'url(#stripRight)', d: 'M941 424L819 590L790 567L862 465Z' },
  { fill: 'url(#rollRight)', d: 'M937 343L943 390Q944 420 938 427Q922 448 905 455Q890 461 847 467Z' },
  { fill: 'url(#upper)', d: 'M920 203L937 343L847 468L712 493L786 374Z' },
  { fill: '#3e003c', d: 'M828 386L888 374L886 382L852 388L826 392Z' },
  { fill: 'url(#leftBody)', d: 'M571 409L604 431L687 490L701 500L697 513L540 544L520 545Z' },
  { fill: 'url(#stripLeft)', d: 'M571 409L600 450L540 541L440 584L453 570Z' },
  { fill: 'url(#leftBody)', d: 'M571 409L604 431L640 457L583 481Z' },
  { fill: 'url(#rollLeft)', d: 'M530 543Q480 550 455 568Q435 586 435 617L437 651L516 551Z' },
  { fill: 'url(#leftFront)', d: 'M513 552Q516 546 527 544L697 513L689 518L637 593L626 586L618 579L454 792L437 650Z' },
  { fill: 'url(#bottomMid)', d: 'M689 517L700 503L714 513L739 673L637 593Z' },
  { fill: 'url(#bottomRight)', d: 'M714 513L774 557L767 567L976 729L835 748L739 673Z' },
  { fill: 'url(#tube)', d: 'M637 593L739 668L752 700L758 742L605 627Z' },
  { fill: D, d: 'M739 673L835 748Q800 753 780 752Q766 750 757 741Q742 722 739 673Z' },
  { fill: D, d: 'M623 587L637 593Q623 616 605 627Q601 614 623 587Z' },
  { fill: D, d: 'M701 492L714 490L716 516L697 513L703 502Z' }
];
</script>

<style>
body {
  margin: 0;
}
.label {
  white-space: pre;
}
.label .latin {
  font-family: "Liberation Mono", monospace;
  font-size: 10px;
}
.title .label .latin {
  font-size: 13px;
}
</style>

<style scoped>
.app {
  height: 100vh;
  display: flex;
  flex-direction: column;
  overflow: hidden;
  background: #efebde;
  color: #000;
  font-family: "Noto Sans CJK SC", sans-serif;
  font-size: 12px;
}
button {
  padding: 0;
  border: 0;
  background: none;
  font: inherit;
  color: inherit;
  flex: none;
}
svg {
  flex: none;
  display: block;
  shape-rendering: crispEdges;
}
.title {
  height: 22px;
  flex: none;
  box-sizing: border-box;
  padding-bottom: 4px;
  display: flex;
  align-items: center;
  margin-left: -4px;
  background: linear-gradient(#0a62f4 0, #0050e0 30%, #0058ea 55%, #0267fe 85%, #0046c8 100%);
  color: #fff;
  font-size: 13px;
  font-weight: bold;
}
.menu {
  height: 20px;
  flex: none;
  box-sizing: border-box;
  display: flex;
  align-items: center;
  gap: 12px;
  margin-left: -3px;
}
.toolrow {
  height: 30px;
  flex: none;
  display: flex;
  border-top: 1px solid #b4b09f;
}
.bar {
  display: flex;
  align-items: center;
  flex: none;
  box-shadow: inset 0 1px #fbfaf5;
  border-right: 1px solid #a29e8e;
  padding-right: 2px;
}
.bar.first {
  margin-left: -15px;
}
.bar.indent {
  padding-left: 8px;
  padding-right: 1px;
}
.bar.filler {
  width: 35px;
}
.bar.last,
.bar.last2 {
  flex: 1 0 auto;
  border-right: 0;
}
.bar .grip {
  width: 3px;
  height: 22px;
  margin: 0 4px;
  border: 1px solid #b9b5a3;
  border-top: 0;
  border-left-color: #fff;
  box-shadow: -1px 0 #b9b5a3, 1px 0 #fff;
  box-sizing: border-box;
}
.bar.wide .grip {
  margin-right: 5px;
}
.slot {
  flex: 1;
  height: 20px;
  margin-left: 4px;
  border: 1px solid #d2cebd;
  border-right: 0;
}
.bar .sep {
  width: 1px;
  height: 20px;
  flex: none;
  margin: 0 4px 0 3px;
  background: #c9c5b3;
}
.tool {
  width: 23px;
  height: 23px;
  display: flex;
  align-items: center;
  justify-content: center;
}
.tool svg,
.tree svg,
.tabs svg,
.commands svg {
  width: 16px;
  height: 16px;
}
.tool.on {
  background: #fff;
  box-shadow: inset 0 0 0 1px #9fb4ca;
  border-radius: 3px;
}
.arrow {
  width: 13px;
  height: 23px;
  display: flex;
  align-items: center;
  justify-content: center;
}
.arrow::before {
  content: "";
  border: 3px solid transparent;
  border-top-color: #000;
  border-bottom: 0;
}
.arrow.off::before {
  border-top-color: #c5bfa5;
}
.commands {
  height: 42px;
  flex: none;
  display: flex;
  align-items: center;
  border-top: 1px solid #b4b09f;
  box-shadow: inset 0 1px #fbfaf5;
}
.commands .sep {
  width: 1px;
  height: 32px;
  flex: none;
  margin: 0 4px 0 3px;
  background: #a9a595;
}
.command,
.mode {
  height: 34px;
  display: flex;
  flex-direction: column;
  align-items: center;
  padding-top: 3px;
  line-height: 12px;
}
.command {
  width: 61px;
}
.mode.active {
  width: 46px;
  padding-right: 14px;
  background: #fff;
  border-top: 1px solid #9fb4ca;
  border-bottom: 1px solid #9fb4ca;
  box-sizing: border-box;
  padding-top: 2px;
}
.mode-arrow {
  height: 34px;
  background: #fff;
  border: 1px solid #9fb4ca;
  border-radius: 0 3px 3px 0;
}
.mode.sketch {
  width: 61px;
  box-sizing: border-box;
  background: #dfe1ec;
  padding-right: 2px;
}
.sketch-arrow {
  height: 34px;
  background: #dfe1ec;
}
.main {
  flex: 1;
  min-height: 0;
  display: flex;
}
.dock {
  width: 30px;
  flex: none;
  border-right: 1px solid #a9a595;
  box-shadow: inset 1px 1px #fff;
  overflow: hidden;
}
.dock.dock-1 {
  border-right: 0;
}
.dock section {
  display: flex;
  flex-direction: column;
  align-items: center;
  border-bottom: 1px solid #a9a595;
}
.dock.dock-1 section + section {
  margin-top: 11px;
  border-top: 1px solid #a9a595;
}
.dock .grip {
  display: block;
  width: 22px;
  height: 2px;
  margin: 5px auto 4px;
  border-top: 1px solid #fff;
  border-bottom: 1px solid #b4b09f;
  box-shadow: 0 2px #fff, 0 3px #b4b09f;
}
.dock section .grip {
  margin-bottom: 3px;
}
.dock section + section .grip {
  margin-bottom: 4px;
}
.dock .sep {
  display: block;
  width: 21px;
  height: 1px;
  margin: 3px auto 4px;
  background: #c0bca9;
}
.dock.narrow {
  width: 14px;
}
.narrow .grip {
  width: 11px;
  margin-left: 0;
}
.narrow .sep {
  width: 11px;
  margin-left: 0;
}
.narrow .arrow {
  width: 7px;
}
.blank.top {
  height: 47px;
  border-bottom: 1px solid #a9a595;
}
.blank.a {
  height: 138px;
}
.blank.b {
  height: 138px;
}
.blank.c {
  height: 69px;
}
.edge {
  border-bottom: 1px solid #a9a595;
}
.manager {
  width: 195px;
  flex: none;
  display: flex;
  flex-direction: column;
  border-top: 1px solid #000;
}
.tabs {
  height: 25px;
  flex: none;
  margin-top: 6px;
  border-top: 2px solid #1c1c18;
  border-left: 2px solid #1c1c18;
  display: flex;
  align-items: flex-end;
  gap: 3px;
}
.tabs button {
  width: 25px;
  height: 24px;
  display: flex;
  align-items: center;
  justify-content: center;
  padding-right: 4px;
  background: #f9f8f3;
  border: 1px solid #a4acb0;
  border-bottom: 0;
  border-radius: 3px 3px 0 0;
}
.tabs button.current {
  width: 30px;
  height: 25px;
  padding-bottom: 4px;
  box-sizing: border-box;
  margin-right: -2px;
  background: #fff;
  border-top: 2px solid #f0a030;
  border-left: 0;
}
.tabs button.expand {
  width: 16px;
  height: 26px;
  padding-right: 0;
  margin: 0 5px 0 auto;
  background: none;
  border: 0;
}
.tabs .expand svg {
  shape-rendering: auto;
}
.tree {
  flex: 1;
  min-height: 0;
  border-left: 2px solid #1c1c18;
  padding: 0 5px 0 2px;
  background: #f7f5ec;
  background-clip: padding-box;
  box-shadow: inset 2px 0 #9c9a90, inset -1px 0 #aaa697;
}
.tree ul {
  height: 100%;
  margin: 0;
  padding: 0;
  list-style: none;
  background: linear-gradient(#5cbcff 0, #86caf8 40%, #b0d6fa 69%, #e2e1ee 100%);
}
.tree li {
  height: 18px;
  display: flex;
  align-items: center;
  padding-left: 7px;
}
.tree li.root {
  padding-left: 3px;
}
.tree li svg + .label {
  margin-left: 4px;
  margin-bottom: 2px;
  line-height: 13px;
}
.tree li.selected .label {
  background: #3a7bcd;
  color: #8fc0f4;
}
.tree li.suppressed {
  color: #7f94a6;
  border-bottom: 2px solid #d6de00;
  box-shadow: 0 1px #4c5400;
}
.plus {
  width: 9px;
  height: 9px;
  margin: 3px 6px 0 0;
  border: 1px solid #8494a0;
  background:
    linear-gradient(#000, #000) center / 5px 1px no-repeat,
    linear-gradient(#000, #000) center / 1px 5px no-repeat,
    #f4f2ea;
}
.stub {
  width: 10px;
  height: 0;
  margin: 0 1px 0 4px;
  border-top: 1px dotted #8fa9b8;
}
.viewport {
  flex: 1;
  min-width: 0;
  position: relative;
  overflow: hidden;
  margin-left: 5px;
  border-left: 1px solid #000;
  border-top: 1px solid #000;
  background: linear-gradient(#58baff 0, #7cc8fd 30%, #a2d4f5 58%, #bedbec 78%, #dfe4e9 100%);
}
.triad {
  position: absolute;
  left: 3px;
  bottom: 0;
}
</style>
